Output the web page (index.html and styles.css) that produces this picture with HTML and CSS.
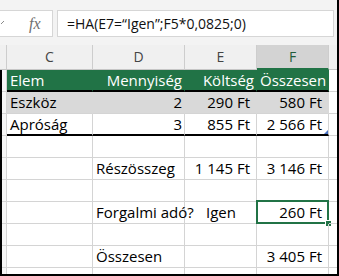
FILE: index.html
```html
<!DOCTYPE html>
<html lang="hu">
<head>
<meta charset="utf-8">
<title>Excel</title>
<link rel="stylesheet" href="styles.css">
</head>
<body>
<div class="app">
  <div class="fbar">
    <div class="namebox">
      <svg class="chev" width="6" height="8" viewBox="0 0 6 8"><polyline points="-3,2 0,5 3,2" fill="none" stroke="#8a8a8a" stroke-width="1"/></svg>
      <span class="fx">fx</span>
    </div>
    <div class="formula">=HA(E7=“Igen”;F5*0,0825;0)</div>
  </div>
  <div class="colhdr">
    <div class="corner"></div>
    <div class="ch">C</div>
    <div class="ch">D</div>
    <div class="ch">E</div>
    <div class="ch sel">F</div>
    <div class="ch last"></div>
  </div>
  <div class="sheet">
    <div class="c rh"></div>
    <div class="c th">Elem</div>
    <div class="c th r">Mennyiség</div>
    <div class="c th r">Költség</div>
    <div class="c th r">Összesen</div>
    <div class="c x"></div>

    <div class="c rh"></div>
    <div class="c band">Eszköz</div>
    <div class="c band r">2</div>
    <div class="c band r cur">290 Ft</div>
    <div class="c band r cur">580 Ft</div>
    <div class="c x"></div>

    <div class="c rh"></div>
    <div class="c endrow">Apróság</div>
    <div class="c endrow r">3</div>
    <div class="c endrow r cur">855 Ft</div>
    <div class="c endrow r cur">2&nbsp;566 Ft<span class="resize"></span></div>
    <div class="c x"></div>

    <div class="c rh"></div><div class="c"></div><div class="c"></div><div class="c"></div><div class="c"></div><div class="c x"></div>

    <div class="c rh"></div>
    <div class="c"></div>
    <div class="c">Részösszeg</div>
    <div class="c r cur">1&nbsp;145 Ft</div>
    <div class="c r cur">3&nbsp;146 Ft</div>
    <div class="c x"></div>

    <div class="c rh"></div><div class="c"></div><div class="c"></div><div class="c"></div><div class="c"></div><div class="c x"></div>

    <div class="c rh"></div>
    <div class="c"></div>
    <div class="c">Forgalmi adó?</div>
    <div class="c ctr">Igen</div>
    <div class="c r cur active">260 Ft<span class="selbox"></span><span class="fill"></span></div>
    <div class="c x"></div>

    <div class="c rh"></div><div class="c"></div><div class="c"></div><div class="c"></div><div class="c"></div><div class="c x"></div>

    <div class="c rh"></div>
    <div class="c"></div>
    <div class="c">Összesen</div>
    <div class="c"></div>
    <div class="c r cur">3&nbsp;405 Ft</div>
    <div class="c x"></div>

    <div class="c rh p"></div><div class="c p"></div><div class="c p"></div><div class="c p"></div><div class="c p"></div><div class="c x p"></div>
  </div>
</div>
</body>
</html>
```

FILE: styles.css
```css
* { box-sizing: border-box; }
html, body { margin: 0; padding: 0; background: #fff; }
body { font-family: "Open Sans", "Noto Sans", sans-serif; }

.app {
  width: 339px;
  height: 276px;
  overflow: hidden;
  border-right: 2px solid #000;
  border-bottom: 2px solid #000;
  background: #fff;
}

.fbar {
  height: 45px;
  background: #f3f3f3;
  padding-top: 10px;
  display: flex;
  gap: 4px;
}
.namebox {
  width: 54px;
  height: 27px;
  margin-left: -1px;
  background: #fff;
  border: 1px solid #d6d6d6;
  position: relative;
  display: flex;
  align-items: center;
}
.chev { position: absolute; left: 1px; top: 8px; }
.fx {
  margin-left: 29px;
  font-family: "Liberation Serif", "DejaVu Serif", serif;
  font-style: italic;
  font-size: 16px;
  color: #707070;
  line-height: 1;
}
.formula {
  width: 277px;
  height: 27px;
  background: #fff;
  border: 1px solid #d6d6d6;
  padding-left: 9px;
  font-size: 14px;
  line-height: 25px;
  color: #111;
  white-space: nowrap;
}

.colhdr {
  height: 25px;
  display: grid;
  grid-template-columns: 7px 86px 92px 72px 72px 8px;
  background: #f0f0f0;
}
.colhdr > div {
  border-right: 1px solid #cdcdcd;
  border-bottom: 1px solid #c6c6c6;
  font-size: 14px;
  color: #444;
  text-align: center;
  line-height: 24px;
}
.colhdr .sel {
  background: #d3d3d3;
  color: #1f5c3a;
  border-bottom: 2px solid #217346;
  line-height: 23px;
}
.colhdr .last { border-right: 0; }

.sheet {
  display: grid;
  grid-template-columns: 5px 86px 92px 72px 72px 8px;
  grid-auto-rows: 22px;
  border-left: 2px solid #000;
}
.c {
  position: relative;
  border-right: 1px solid #d4d4d4;
  border-bottom: 1px solid #d4d4d4;
  padding: 0 2px 0 3px;
  font-size: 15px;
  line-height: 21px;
  color: #000;
  white-space: nowrap;
}
.c.p { height: 6px; border-bottom: 0; }
.rh { background: #f6f6f6; padding: 0; }
.x { border-right: 0; padding: 0; }
.r { text-align: right; }
.ctr { text-align: center; }
.cur { padding-right: 6px; }

.th {
  background: #217346;
  color: #fff;
  border-right-color: #217346;
  border-bottom: 2px solid #000;
  line-height: 20px;
}
.band {
  background: #d9d9d9;
  border-right-color: #d9d9d9;
}
.endrow {
  border-bottom: 2px solid #000;
  line-height: 20px;
}

.resize {
  position: absolute;
  right: 0;
  bottom: 0;
  width: 0;
  height: 0;
  border-left: 4px solid transparent;
  border-bottom: 4px solid #4a72c4;
}

.selbox {
  position: absolute;
  left: -1px;
  top: -2px;
  right: -1px;
  bottom: -1px;
  border: 2px solid #217346;
}
.fill {
  position: absolute;
  right: -4px;
  bottom: -4px;
  width: 7px;
  height: 7px;
  background: #217346;
  border: 1px solid #fff;
}
```
